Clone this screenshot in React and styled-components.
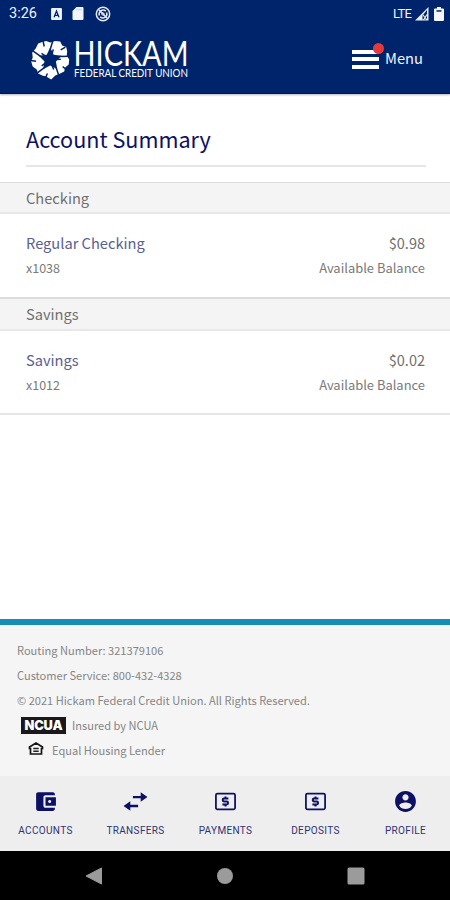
import React from 'react';
import styled, { createGlobalStyle } from 'styled-components';

const NAVY = '#00246b';
const INK = '#0d1164';

const Global = createGlobalStyle`
  *, *::before, *::after { box-sizing: border-box; }
  body { margin: 0; background: #fff; }
`;

const Screen = styled.div`
  width: 450px;
  height: 900px;
  display: flex;
  flex-direction: column;
  overflow: hidden;
  background: #fff;
  color: #707070;
  font-family: "Noto Sans CJK JP", "Noto Sans", sans-serif;
`;

const StatusBar = styled.div`
  height: 26px;
  flex: none;
  display: flex;
  align-items: center;
  justify-content: space-between;
  padding: 1px 6px 0 9px;
  background: ${NAVY};
  color: #f1f3f8;
  font-family: Roboto, sans-serif;
`;

const StatusGroup = styled.div`
  display: flex;
  align-items: center;
  gap: ${(p) => p.$gap}px;
`;

const Clock = styled.span`
  font-size: 14.5px;
  width: 32px;
`;

const Network = styled.span`
  font-size: 13px;
  letter-spacing: -0.8px;
`;

const Header = styled.header`
  height: 68px;
  flex: none;
  display: flex;
  align-items: flex-start;
  justify-content: space-between;
  padding: 4px 27px 0 30px;
  background: ${NAVY};
  border-bottom: 1px solid #0b0f5c;
  box-shadow: 0 1px 2px rgba(0, 0, 0, 0.3);
`;

const LogoMark = styled.svg`
  overflow: visible;
`;

const MenuButton = styled.button`
  display: flex;
  align-items: center;
  gap: 6px;
  margin-top: 10px;
  padding: 0;
  border: 0;
  background: none;
  color: #f3f4f8;
  font: 400 14.7px/36px "Noto Sans CJK JP", "Noto Sans", sans-serif;
`;

const Bars = styled.span`
  position: relative;
  display: flex;
  flex-direction: column;
  gap: 3.5px;
  width: 27px;
  margin-top: 2px;
`;

const Bar = styled.span`
  height: 4px;
  background: #fff;
`;

const AlertDot = styled.span`
  position: absolute;
  top: -7px;
  right: -5px;
  width: 11px;
  height: 11px;
  border-radius: 50%;
  background: #e5383b;
`;

const Title = styled.h1`
  flex: none;
  margin: 27px 24px 15px 26px;
  height: 46px;
  border-bottom: 2px solid #e6e6e6;
  color: ${INK};
  font-size: 21.6px;
  font-weight: 400;
  line-height: 36px;
`;

const SectionTitle = styled.h2`
  flex: none;
  margin: 0;
  height: ${(p) => p.$height}px;
  padding-left: 26px;
  background: #f4f4f4;
  border-top: ${(p) => p.$rule}px solid #dcdcdc;
  border-bottom: 2px solid #e8e8e8;
  font-size: 14.65px;
  font-weight: 400;
  line-height: 30px;
`;

const AccountRow = styled.section`
  flex: none;
  height: ${(p) => p.$height}px;
  padding: 16px 25px 0 26px;
`;

const Line = styled.div`
  display: flex;
  justify-content: space-between;
  line-height: 25px;
`;

const AccountName = styled.span`
  color: #5a5e92;
  font-size: 14.65px;
`;

const Amount = styled.span`
  font-size: 14.5px;
`;

const Detail = styled.span`
  color: #7a7a7a;
  font-size: ${(p) => (p.$small ? 12.5 : 12.95)}px;
`;

const ListEnd = styled.div`
  flex: 1;
  border-top: 2px solid #e6e6e6;
`;

const Footer = styled.footer`
  flex: none;
  height: 157px;
  padding: 12px 17px 0;
  border-top: 6px solid #168fb5;
  background: #f5f5f5;
  color: #858585;
  font-size: 11.07px;
`;

const FooterLine = styled.div`
  display: flex;
  align-items: center;
  height: 25px;
  gap: ${(p) => p.$gap || 0}px;
  padding-left: ${(p) => p.$indent || 0}px;
`;

const NcuaBadge = styled.span`
  width: 45px;
  height: 17px;
  margin-top: 1px;
  background: #191919;
  color: #fff;
  font: 900 12.8px/17px Inter, sans-serif;
  letter-spacing: -0.1px;
  text-align: center;
`;

const TabBar = styled.nav`
  flex: none;
  height: 75px;
  display: grid;
  grid-template-columns: repeat(5, 1fr);
  background: #eee;
`;

const Tab = styled.a`
  display: flex;
  flex-direction: column;
  align-items: center;
  padding-top: 13px;
  gap: 10px;
  color: ${INK};
`;

const TabLabel = styled.span`
  padding-left: 1px;
  color: #2f3375;
  font: 400 10px/13px Roboto, sans-serif;
  letter-spacing: 0.35px;
`;

const SystemNav = styled.div`
  flex: none;
  height: 49px;
  display: flex;
  align-items: center;
  justify-content: space-around;
  padding: 0 29px;
  background: #000;
`;

const Logo = () => (
  <LogoMark width="162" height="54" viewBox="0 -8 162 54">
    <g transform="translate(20.2 21.5)">
      <path
        fill="#fff"
        d="M-4-18.500 0-17 5-18.500 10-18 12-14 16-12.500 17-8 16.500-4 19 0 18.500 5 15 8 14 12 10 14 5 16 1 20-4 17-8 16-12 14-13.500 10-17.500 7-19 2-17.500-2-18-7-14.500-11-12-16-8-17.500Z"
      />
      {[0, 72, 144, 216, 288].map((a) => (
        <path
          key={a}
          transform={`rotate(${a})`}
          d="M0-10 3-20M-5 19-2.800 14M1.500 5 3.500 10"
          fill="none"
          stroke={NAVY}
          strokeWidth="1.500"
        />
      ))}
      <path
        fill={NAVY}
        d="M0-12 3.500-4.800 11.400-3.700 5.700 1.900 7.100 9.700 0 6-7.100 9.700-5.700 1.900-11.400-3.700-3.500-4.800Z"
      />
    </g>
    <g fill="#fff" fontFamily="Lato, sans-serif">
      <text x="43.500" y="27.700" fontSize="34" textLength="115" lengthAdjust="spacingAndGlyphs">HICKAM</text>
      <text x="44" y="39.300" fontSize="10.600" textLength="114" lengthAdjust="spacingAndGlyphs">FEDERAL CREDIT UNION</text>
    </g>
  </LogoMark>
);

const KeyboardIcon = () => (
  <svg width="11" height="12" viewBox="0 0 10 11">
    <rect width="10" height="11" rx="1" fill="#eef1f7" />
    <path d="M2.8 8.5 5 2.8l2.2 5.7M3.6 6.7h2.8" stroke={NAVY} strokeWidth="1.2" fill="none" />
  </svg>
);

const SdIcon = () => (
  <svg width="12" height="13" viewBox="0 0 11 13">
    <path d="M4 0h6a1 1 0 0 1 1 1v11a1 1 0 0 1-1 1H1a1 1 0 0 1-1-1V4Z" fill="#f3f5fa" />
    <path d="M4.5 1.5v2M6.5 1.5v2M8.5 1.5v2" stroke="#b9c2d8" strokeWidth=".9" />
  </svg>
);

const SyncIcon = () => (
  <svg width="17" height="16" viewBox="-1 0 17 16" fill="none" stroke="#e4e8f1">
    <circle cx="8" cy="8" r="6.7" strokeWidth="1.5" />
    <path d="M4.4 9.5a4 4 0 0 1 6.4-4.4M11.6 6.5a4 4 0 0 1-6.4 4.4M3.8 3.8l8.4 8.4" strokeWidth="1.5" />
    <circle cx="8" cy="8" r="1.2" strokeWidth="1" />
  </svg>
);

const SignalIcon = () => (
  <svg width="15" height="14" viewBox="0 0 15 14">
    <path d="M0 13.5 13.5 0v13.5Z" fill="#e9edf4" />
    <path d="M7.5 8.5 12 3v9.5H7.5Z" fill={NAVY} />
    <path d="m8 8 4 5M12 7.5 8.5 13" stroke="#e9edf4" strokeWidth="1.2" />
  </svg>
);

const BatteryIcon = () => (
  <svg width="10" height="14" viewBox="0 0 10 14">
    <path d="M3 0h4v1.6h2a1 1 0 0 1 1 1V13a1 1 0 0 1-1 1H1a1 1 0 0 1-1-1V2.6a1 1 0 0 1 1-1h2Z" fill="#f5f7fb" />
    <path d="M2.5 3.2h5v1.5h-5z" fill={NAVY} />
  </svg>
);

const HouseIcon = () => (
  <svg width="16" height="16" viewBox="0 0 16 16">
    <path d="M8 1 14.5 5V6.5H13.500V12H2.5V6.5H1.5V5Z" fill="none" stroke="#161616" strokeWidth="1.7" />
    <path d="M5.3 6.6h5.4M5.3 9.2h5.4" stroke="#222" strokeWidth="1.5" />
  </svg>
);

const ICONS = {
  wallet: 'M21 18v1c0 1.100-.9 2-2 2H5c-1.110 0-2-.9-2-2V5c0-1.100.890-2 2-2h14c1.100 0 2 .9 2 2v1h-9c-1.110 0-2 .9-2 2v8c0 1.100.890 2 2 2h9zm-9-2h10V8H12v8zm4-2.500c-.830 0-1.500-.670-1.500-1.500s.670-1.500 1.500-1.500 1.500.670 1.500 1.500-.670 1.500-1.500 1.500z',
  transfer: 'M17 3.200v3.400H9.500v2.200H17v3.400l6.500-4.500ZM7 11.800v3.400h7.500v2.200H7v3.400L.5 16.300Z',
  person: 'M12 2C6.480 2 2 6.480 2 12s4.480 10 10 10 10-4.480 10-10S17.520 2 12 2zm0 3c1.660 0 3 1.340 3 3s-1.340 3-3 3-3-1.340-3-3 1.340-3 3-3zm0 14.200c-2.500 0-4.710-1.280-6-3.220.030-1.990 4-3.080 6-3.080 1.990 0 5.970 1.090 6 3.080-1.290 1.940-3.500 3.220-6 3.220z',
};

const TabIcon = ({ kind }) => (
  <svg width="25" height="25" viewBox="0 0 24 24" fill="currentColor">
    {kind === 'money' ? (
      <g fill="none" stroke="currentColor">
        <rect x="2.8" y="4.4" width="18.4" height="15.2" rx="1.5" strokeWidth="1.7" />
        <path d="M14.8 9.2h-4.300q-1.100 0-1.100 1.100v.6q0 1.100 1.100 1.100h2.800q1.100 0 1.100 1.100v.6q0 1.100-1.100 1.100H9M12 7.300v2M12 14.700v2" strokeWidth="1.9" />
      </g>
    ) : (
      <path d={ICONS[kind]} />
    )}
  </svg>
);

const TABS = [
  ['ACCOUNTS', 'wallet'],
  ['TRANSFERS', 'transfer'],
  ['PAYMENTS', 'money'],
  ['DEPOSITS', 'money'],
  ['PROFILE', 'person'],
];

const Account = ({ name, number, balance, height }) => (
  <AccountRow $height={height}>
    <Line>
      <AccountName>{name}</AccountName>
      <Amount>{balance}</Amount>
    </Line>
    <Line>
      <Detail $small>{number}</Detail>
      <Detail>Available Balance</Detail>
    </Line>
  </AccountRow>
);

export default function App() {
  return (
    <Screen>
      <Global />
      <StatusBar>
        <StatusGroup $gap={10}>
          <Clock>3:26</Clock>
          <KeyboardIcon />
          <SdIcon />
          <SyncIcon />
        </StatusGroup>
        <StatusGroup $gap={4}>
          <Network>LTE</Network>
          <SignalIcon />
          <BatteryIcon />
        </StatusGroup>
      </StatusBar>
      <Header>
        <Logo />
        <MenuButton>
          <Bars>
            <Bar />
            <Bar />
            <Bar />
            <AlertDot />
          </Bars>
          Menu
        </MenuButton>
      </Header>
      <Title>Account Summary</Title>
      <SectionTitle $height={32} $rule={1}>Checking</SectionTitle>
      <Account name="Regular Checking" number="x1038" balance="$0.98" height={83} />
      <SectionTitle $height={34} $rule={2}>Savings</SectionTitle>
      <Account name="Savings" number="x1012" balance="$0.02" height={82} />
      <ListEnd />
      <Footer>
        <FooterLine>Routing Number: 321379106</FooterLine>
        <FooterLine>Customer Service: 800-432-4328</FooterLine>
        <FooterLine>© 2021 Hickam Federal Credit Union. All Rights Reserved.</FooterLine>
        <FooterLine $indent={4} $gap={6}>
          <NcuaBadge>NCUA</NcuaBadge>
          Insured by NCUA
        </FooterLine>
        <FooterLine $indent={11} $gap={8}>
          <HouseIcon />
          Equal Housing Lender
        </FooterLine>
      </Footer>
      <TabBar>
        {TABS.map(([label, kind]) => (
          <Tab key={label}>
            <TabIcon kind={kind} />
            <TabLabel>{label}</TabLabel>
          </Tab>
        ))}
      </TabBar>
      <SystemNav>
        <svg width="18" height="18" viewBox="0 0 18 18"><path d="M1 9 16.500 1v16Z" fill="#9b9b9b" stroke="#9b9b9b" /></svg>
        <svg width="18" height="18" viewBox="0 0 18 18"><circle cx="9" cy="9" r="8" fill="#9b9b9b" /></svg>
        <svg width="18" height="18" viewBox="0 0 18 18"><rect x=".5" y=".5" width="17" height="17" rx="1.500" fill="#9b9b9b" /></svg>
      </SystemNav>
    </Screen>
  );
}
